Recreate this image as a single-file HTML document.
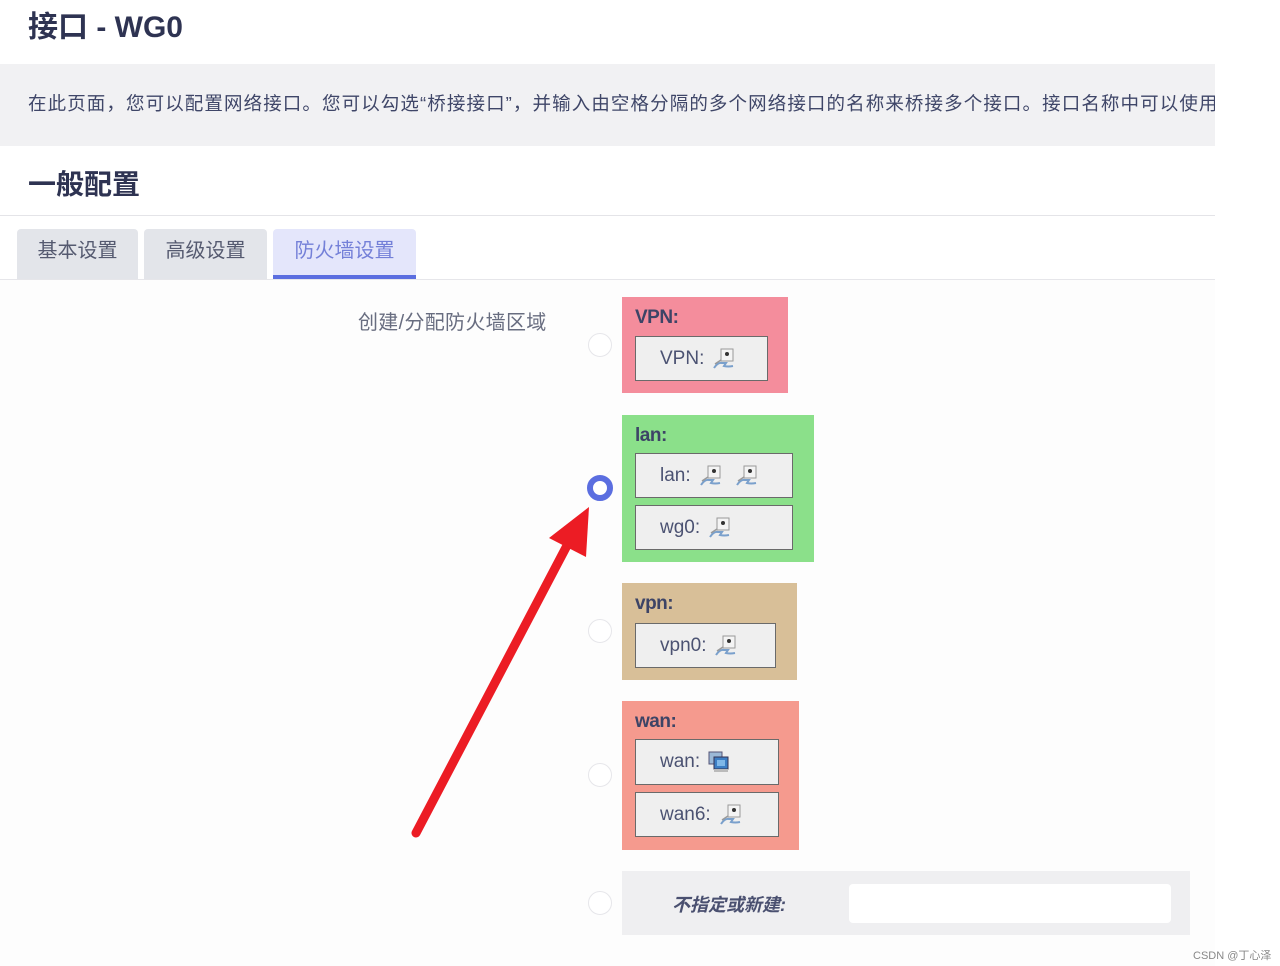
<!DOCTYPE html>
<html><head><meta charset="utf-8"><style>
*{margin:0;padding:0;box-sizing:border-box}
body{width:1280px;height:966px;background:#fff;position:relative;overflow:hidden;font-family:"Liberation Sans","Noto Sans CJK SC",sans-serif;color:#3a3f5c}
.a{position:absolute}
.t{white-space:nowrap}
.zone{position:absolute}
.zl{position:absolute;left:13px;font-size:19px;color:#3d4466;letter-spacing:-0.5px;font-weight:bold;-webkit-text-stroke:0}
.ib{position:absolute;left:13px;background:#efefef;border:1.5px solid #6a6a6a;font-size:19px;color:#4b5272;padding-left:24px;display:flex;align-items:center}
.radio{position:absolute;width:24px;height:24px;border-radius:50%;border:1.5px solid #e6e6ea;background:#fff}
.ic{display:inline-block;margin-left:8px;vertical-align:middle}
</style></head><body>
<div class="a t" style="left:28px;top:2px;font-size:30px;font-weight:bold;color:#2e3352">接口 - WG0</div>
<div class="a" style="left:0;top:64px;width:1215px;height:82px;background:#f1f1f3;overflow:hidden">
<div class="t" style="position:absolute;left:28px;top:26px;font-size:18.5px;color:#3f4668;letter-spacing:1.1px">在此页面，您可以配置网络接口。您可以勾选“桥接接口”，并输入由空格分隔的多个网络接口的名称来桥接多个接口。接口名称中可以使用</div>
</div>
<div class="a t" style="left:28px;top:163px;font-size:28px;font-weight:bold;color:#2e3352">一般配置</div>
<div class="a" style="left:0;top:215px;width:1215px;height:1px;background:#e4e4e8"></div>
<div class="a" style="left:17px;top:229px;width:121px;height:50px;background:#e3e5ea;border-radius:4px 4px 0 0;font-size:20px;color:#555a70;text-align:center;line-height:44px">基本设置</div>
<div class="a" style="left:144px;top:229px;width:123px;height:50px;background:#e3e5ea;border-radius:4px 4px 0 0;font-size:20px;color:#555a70;text-align:center;line-height:44px">高级设置</div>
<div class="a" style="left:273px;top:229px;width:143px;height:50px;background:#e4e6fb;border-radius:4px 4px 0 0;font-size:20px;color:#7480d8;text-align:center;line-height:44px;border-bottom:4px solid #5b6ee0">防火墙设置</div>
<div class="a" style="left:0;top:279px;width:1215px;height:1px;background:#e6e6ea"></div>
<div class="a" style="left:0;top:280px;width:1215px;height:686px;background:#fdfdfd"></div>
<div class="a t" style="left:358px;top:306px;font-size:20px;color:#686d80;letter-spacing:0.3px">创建/分配防火墙区域</div>

<div class="radio" style="left:588px;top:333px"></div>
<div class="a" style="left:587px;top:475px;width:26px;height:26px;border-radius:50%;border:6px solid #5b6ee0;background:#fff"></div>
<div class="radio" style="left:588px;top:619px"></div>
<div class="radio" style="left:588px;top:763px"></div>
<div class="radio" style="left:588px;top:891px"></div>

<svg width="0" height="0" style="position:absolute"><defs>
<symbol id="pc" viewBox="0 0 22 22"><rect x="9" y="1" width="12" height="12" fill="#f4f4f4" stroke="#999" stroke-width="1"/><circle cx="15" cy="6" r="2" fill="#333"/><path d="M2 20 Q6 14 10 15 L14 15 L12 18 Q16 19 21 18" fill="none" stroke="#7aa0cc" stroke-width="2"/><path d="M3 16 L9 12" stroke="#999" stroke-width="1.5"/></symbol>
<symbol id="pc2" viewBox="0 0 22 22"><rect x="1" y="1" width="13" height="12" fill="#9bb8d6" stroke="#557" stroke-width="1"/><rect x="6" y="6" width="14" height="12" fill="#3c7ec4" stroke="#335" stroke-width="1"/><rect x="9" y="9" width="8" height="6" fill="#7fb7e8"/><rect x="6" y="18" width="14" height="3" fill="#bbb"/></symbol>
</defs></svg>

<div class="zone" style="left:622px;top:297px;width:166px;height:96px;background:#f48d9c">
<div class="zl" style="top:10px">VPN:</div>
<div class="ib" style="top:39px;width:133px;height:45px">VPN:<svg class="ic" width="22" height="22"><use href="#pc"/></svg></div>
</div>
<div class="zone" style="left:622px;top:415px;width:192px;height:147px;background:#8be08a">
<div class="zl" style="top:10px">lan:</div>
<div class="ib" style="top:38px;width:158px;height:45px">lan:<svg class="ic" width="22" height="22"><use href="#pc"/></svg><svg class="ic" style="margin-left:14px" width="22" height="22"><use href="#pc"/></svg></div>
<div class="ib" style="top:90px;width:158px;height:45px">wg0:<svg class="ic" width="22" height="22"><use href="#pc"/></svg></div>
</div>
<div class="zone" style="left:622px;top:583px;width:175px;height:97px;background:#d8bf98">
<div class="zl" style="top:10px">vpn:</div>
<div class="ib" style="top:40px;width:141px;height:45px">vpn0:<svg class="ic" width="22" height="22"><use href="#pc"/></svg></div>
</div>
<div class="zone" style="left:622px;top:701px;width:177px;height:149px;background:#f59a8e">
<div class="zl" style="top:10px">wan:</div>
<div class="ib" style="top:38px;width:144px;height:46px">wan:<svg class="ic" width="22" height="22"><use href="#pc2"/></svg></div>
<div class="ib" style="top:91px;width:144px;height:45px">wan6:<svg class="ic" width="22" height="22"><use href="#pc"/></svg></div>
</div>
<div class="a" style="left:622px;top:871px;width:568px;height:64px;background:#efeff1">
<div class="a t" style="left:50px;top:20px;font-size:18px;font-weight:bold;font-style:italic;color:#4a5070">不指定或新建:</div>
<div class="a" style="left:227px;top:13px;width:322px;height:39px;background:#fff;border-radius:4px"></div>
</div>

<svg class="a" style="left:0;top:0" width="1280" height="966">
<line x1="416" y1="833" x2="572" y2="536" stroke="#ec1c24" stroke-width="9" stroke-linecap="round"/>
<polygon points="589,507 549,538 586,557" fill="#ec1c24"/>
</svg>
<div class="a t" style="left:1193px;top:947px;font-size:11px;color:#888">CSDN @丁心泽</div>
</body></html>
